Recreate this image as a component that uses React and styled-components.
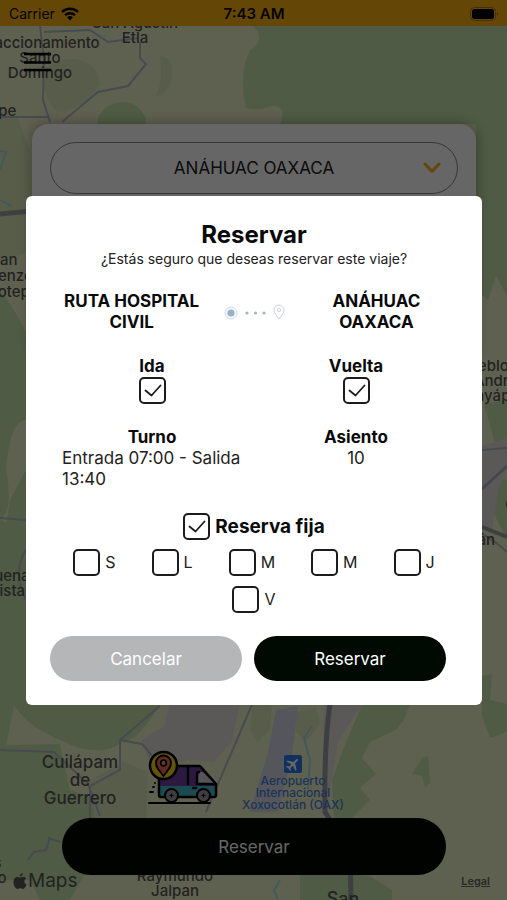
import React, { useState } from "react";
import styled, { createGlobalStyle } from "styled-components";

const GlobalStyle = createGlobalStyle`
  * {
    box-sizing: border-box;
  }
  body {
    margin: 0;
    font-family: Inter, "Liberation Sans", sans-serif;
    color: #0a0a0a;
  }
  button, select, input {
    font-family: inherit;
  }
`;

const Screen = styled.div`
  position: relative;
  min-height: 100vh;
  display: flex;
  flex-direction: column;
  overflow: hidden;
  background-color: #f0f5c8;
`;

/* ---------- map ---------- */

const MapLayer = styled.div`
  position: absolute;
  inset: 0;
`;

const MapDrawing = styled.svg`
  display: block;
  width: 100%;
  height: 100%;
`;

const MapLabel = styled.span`
  position: absolute;
  left: ${({ $x }) => $x}px;
  top: ${({ $y }) => $y}px;
  transform: translateX(-50%);
  text-align: center;
  white-space: pre;
  font-weight: 500;
  font-size: ${({ $size }) => $size || 15}px;
  line-height: ${({ $line }) => $line || 15}px;
  color: ${({ $color }) => $color || "#555555"};
`;

const MapPin = styled.svg`
  position: absolute;
  left: ${({ $x }) => $x}px;
  top: ${({ $y }) => $y}px;
`;

const Attribution = styled.div`
  position: absolute;
  left: 13px;
  right: 17px;
  bottom: 8px;
  display: flex;
  justify-content: space-between;
  align-items: center;
  color: #555555;
`;

const MapsLogo = styled.span`
  display: flex;
  align-items: center;
  gap: 1px;
  font-size: 19px;
  line-height: 22px;
`;

const LegalLink = styled.a`
  color: #666666;
  font-size: 11px;
  font-weight: 600;
`;

/* ---------- screen behind the dialog ---------- */

const StatusBar = styled.header`
  position: relative;
  display: grid;
  grid-template-columns: 1fr auto 1fr;
  align-items: center;
  height: 26px;
  padding: 2px 8px 0 9px;
  background-color: #fbb211;
  font-size: 14px;
  line-height: 20px;
`;

const Carrier = styled.span`
  display: flex;
  align-items: center;
  gap: 6px;
`;

const Clock = styled.span`
  font-size: 15px;
  font-weight: 600;
`;

const Battery = styled.svg`
  justify-self: end;
`;

const MenuButton = styled.button`
  position: relative;
  align-self: flex-start;
  display: flex;
  margin: 25px 0 0 22px;
  padding: 0;
  border: none;
  background-color: transparent;
  cursor: pointer;
`;

const RouteCard = styled.section`
  position: relative;
  margin: 50px 31px 0 32px;
  padding: 18px;
  height: 240px;
  border-radius: 16px;
  background-color: #ffffff;
  box-shadow: 0 0 14px rgba(0, 0, 0, 0.35);
`;

const SelectField = styled.label`
  display: grid;
  align-items: center;

  > * {
    grid-area: 1 / 1;
  }
`;

const RouteSelect = styled.select`
  appearance: none;
  width: 100%;
  height: 52px;
  border: 1px solid #888888;
  border-radius: 26px;
  background-color: #ffffff;
  color: #222222;
  font-size: 17px;
  text-align-last: center;
`;

const SelectArrow = styled.svg`
  justify-self: end;
  margin-right: 17px;
  pointer-events: none;
`;

const ReserveBar = styled.div`
  position: relative;
  margin-top: auto;
  padding: 0 61px 25px 62px;
`;

const ReserveButton = styled.button`
  width: 100%;
  height: 57px;
  border: none;
  border-radius: 29px;
  background-color: #000800;
  color: #ffffff;
  font-size: 17px;
  cursor: pointer;
`;

/* ---------- dialog ---------- */

const Backdrop = styled.div`
  position: fixed;
  inset: 0;
  display: flex;
  align-items: center;
  justify-content: center;
  padding: 1px 25px 0 26px;
  background-color: rgba(0, 0, 0, 0.6);
`;

const Modal = styled.div`
  width: 100%;
  display: flex;
  flex-direction: column;
  gap: 23px;
  padding: 24px;
  border-radius: 6px;
  background-color: #ffffff;
  font-size: 17px;
  line-height: 21px;
`;

const ModalHeader = styled.div`
  text-align: center;
`;

const ModalTitle = styled.h1`
  margin: 0;
  font-size: 24px;
  line-height: 30px;
  font-weight: 700;
`;

const ModalText = styled.p`
  margin: 0;
  color: #222222;
  font-size: 14px;
  line-height: 18px;
`;

const RouteRow = styled.div`
  display: grid;
  grid-template-columns: 2fr 1fr 2fr;
  align-items: center;
  justify-items: center;
`;

const RouteName = styled.strong`
  padding: 0 8px;
  text-align: center;
  font-weight: 700;
`;

const TwoColumns = styled.div`
  display: grid;
  grid-template-columns: 1fr 1fr;
`;

const Field = styled.label`
  display: flex;
  flex-direction: column;
  align-items: center;
  font-weight: 700;
`;

const Detail = styled.div`
  display: flex;
  flex-direction: column;
  align-items: center;
  padding: 0 12px;
  color: #222222;
`;

const DetailTitle = styled.strong`
  color: #0a0a0a;
  font-weight: 700;
`;

const FixedBooking = styled.div`
  display: flex;
  flex-direction: column;
  gap: 9px;
`;

const FixedLabel = styled.label`
  display: flex;
  align-items: center;
  justify-content: center;
  gap: 5px;
  font-size: 19px;
  font-weight: 700;
`;

const Days = styled.div`
  display: flex;
  flex-wrap: wrap;
  justify-content: center;
  gap: 10px 36px;
`;

const DayLabel = styled.label`
  display: flex;
  align-items: center;
  gap: 5px;
  color: #222222;
  font-size: 16px;
`;

const CheckWrapper = styled.span`
  display: grid;

  > * {
    grid-area: 1 / 1;
  }
  svg {
    pointer-events: none;
  }
`;

const CheckInput = styled.input`
  appearance: none;
  width: 27px;
  height: 27px;
  margin: 0;
  border: 2px solid #1c1c1c;
  border-radius: 5px;
  background-color: #ffffff;
`;

const Actions = styled.div`
  display: grid;
  grid-template-columns: 1fr 1fr;
`;

const ActionButton = styled.button`
  height: 45px;
  margin-right: 12px;
  border: none;
  border-radius: 23px;
  background-color: ${({ $muted }) => ($muted ? "#b5b6b8" : "#000a02")};
  color: #ffffff;
  font-size: 17px;
  cursor: pointer;
`;

const labels = [
  { text: "San Agustín\nEtla", x: 135, y: 15 },
  { text: "Fraccionamiento\nSanto\nDomingo", x: 40, y: 35 },
  { text: "Felipe", x: -5, y: 103 },
  { text: "San\nLorenzo\nCacaotepec", x: 4, y: 252, line: 16 },
  { text: "Pueblo\nSan Andrés", x: 484, y: 358 },
  { text: "Huayápam", x: 494, y: 388 },
  { text: "Tlalixtac\nde Cabrera", x: 545, y: 481 },
  { text: "Tomatlán", x: 462, y: 532 },
  { text: "Buena\nVista", x: 7, y: 568 },
  { text: "Cuilápam\nde\nGuerrero", x: 80, y: 753, size: 17, line: 18 },
  {
    text: "Aeropuerto\nInternacional\nXoxocotlán (OAX)",
    x: 293,
    y: 775,
    size: 12,
    line: 12,
    color: "#4780d8",
  },
  { text: "Andrés\nZaachilo", x: -24, y: 855 },
  { text: "San\nRaymundo\nJalpan", x: 175, y: 853 },
  { text: "San\nBartolo", x: 343, y: 890, size: 18, line: 18 },
];

const days = ["S", "L", "M", "M", "J", "V"];

const MapBackground = () => (
  <MapDrawing viewBox="0 0 507 900" preserveAspectRatio="xMidYMid slice" aria-hidden="true">
    <rect width="507" height="900" fill="#eef2c8" />
    <g fill="#c6e4aa">
      <path d="M0 112L18 118 30 150 34 250 0 262z" fill="#dce9ba" />
      <path d="M44 70Q62 55 80 60T100 84Q84 110 58 112 40 98 44 70z" fill="#d9e9b8" />
      <path d="M98 118Q104 104 122 102 140 102 146 120V130H98z" />
      <path d="M160 56q14 2 12 20t-16 20q8-18 4-40z" fill="#d9e9b8" />
      <path d="M253 26H507V296L496 276 488 300 476 290V124H280Q288 106 272 106 258 112 246 108 238 74 250 50 262 44 258 32z" />
      <path d="M0 292Q12 304 26 332V420Q10 420 6 470 14 510 0 520z" />
      <path d="M10 500L26 470V540H4z" />
      <path d="M0 520L26 530V704H0z" />
      <path d="M0 630L26 620V704H160Q140 740 122 742 100 760 60 740 30 728 14 706L6 746H0z" />
      <path d="M0 745L60 744 70 790 100 800 110 830 70 900H40L30 880H0z" />
      <path d="M90 780L124 762 148 772 146 830H96z" fill="#d9e9b8" />
      <path d="M484 404L507 400V452L494 440z" />
      <path d="M482 468L507 480V540L492 510z" />
      <path d="M362 704H410L404 720 396 730 370 742 362 758 376 774 360 788 370 800 350 820H334L332 780 342 752z" />
      <path d="M422 758L428 756 430 782 425 788 422 776 412 774z" />
      <path d="M482 676L492 674 490 700 507 704V732L490 738 482 716z" />
      <path d="M253 704H272L270 730 258 742 250 730z" fill="#d9e9b8" />
      <path d="M296 712L316 708 320 724 306 742 296 732z" fill="#d9e9b8" />
      <path d="M300 870L370 876 392 890V900H300z" />
    </g>
    <g fill="#e2dedc">
      <path d="M170 704H240L232 742 214 762 190 760 150 766 142 740 164 726z" />
      <path d="M324 704H362L338 742 330 790 322 800z" />
      <path d="M482 446L507 438V470L498 490 492 530 482 528z" />
      <path d="M276 710L298 706 292 756 278 812H250L268 752z" fill="#d3d7e4" />
    </g>
    <g fill="none" stroke="#b3bac6" strokeWidth="2">
      <path d="M40 26L44 60 43 100 50 122M44 32L90 30 108 42 138 38M140 42V58L146 64 128 86 98 92 62 122M0 117H48" />
      <path d="M0 750L54 752 88 784 100 816M160 706L120 740V770L90 786V820M120 740L142 744 154 758" />
      <path d="M254 700L206 812M48 838L60 842M28 860L34 852 46 850 50 838" />
      <path d="M482 534Q494 540 507 552M482 450L507 448M0 518L26 520M26 550Q12 570 26 600" />
    </g>
    <g fill="none" stroke="#a8dce8" strokeWidth="2">
      <path d="M0 151L6 152 0 170M0 200L12 206" />
      <path d="M312 726L304 738 310 760 308 790M280 880L274 890 278 900" />
    </g>
    <g fill="none" stroke="#9b9ea8" strokeWidth="5">
      <path d="M0 214L32 211" />
      <path d="M330 704Q324 744 325 812L350 850 351 900" />
      <path d="M482 489L507 466" strokeWidth="3" stroke="#aab2c4" />
      <path d="M482 527L507 537" strokeWidth="4" />
    </g>
  </MapDrawing>
);

const VanPin = () => (
  <MapPin $x={148} $y={750} width="71" height="56" viewBox="0 0 71 56" aria-hidden="true">
    <path d="M11 38V20L30 16H51L60 26 68 34V38z" fill="#6b3fa0" />
    <path d="M11 36H68V47H11z" fill="#45bcc8" />
    <path d="M51 22H55L67 34H50V25z" fill="#d5d2da" />
    <g fill="none" stroke="#000000" strokeWidth="2.500" strokeLinejoin="round" strokeLinecap="round">
      <path d="M27 16H52L68 34V45Q68 47 66 47H62M48 47H31M16 47H13Q11 47 11 45V28" />
      <path d="M40 17V34M51 22Q49 22 49 25V34H67" />
      <path d="M45 38H48" />
      <path d="M1 53H62M2 42H5M5 37H6M7 33H7" strokeWidth="2" />
    </g>
    <g fill="#9c9ca6" stroke="#000000" strokeWidth="2">
      <circle cx="23.500" cy="45.500" r="6.500" />
      <circle cx="55.500" cy="45.500" r="6.500" />
    </g>
    <path d="M23.500 43.500V47.500M21.500 45.500H25.500M55.500 43.500V47.500M53.500 45.500H57.500" stroke="#000000" strokeWidth="1.200" />
    <circle cx="15.500" cy="15.500" r="13.500" fill="#fbd118" stroke="#000000" strokeWidth="2.500" />
    <path d="M15.500 26C10 19 8 17 8 13a7.500 7.500 0 0 1 15 0C23 17 21 19 15.500 26z" fill="#f26b4e" stroke="#000000" strokeWidth="1.800" />
    <circle cx="15.500" cy="13" r="2.800" fill="#f9a06a" stroke="#000000" strokeWidth="1.800" />
  </MapPin>
);

const AirportPin = () => (
  <MapPin $x={284} $y={755} width="18" height="18" viewBox="0 0 18 18" aria-hidden="true">
    <rect width="18" height="18" rx="2" fill="#2878e8" />
    <path
      transform="rotate(45 9 9)"
      d="M9 2.2Q10 2.2 10 4.5V7L15.5 10.5V12L10 10.3V13.5L12 15V16L9 15.2 6 16V15L8 13.5V10.3L2.5 12V10.5L8 7V4.5Q8 2.2 9 2.2z"
      fill="#ffffff"
    />
  </MapPin>
);

const RouteIcon = () => (
  <svg width="62" height="18" viewBox="0 0 62 18" aria-hidden="true">
    <circle cx="8" cy="10" r="6" fill="#f3f7fb" stroke="#cddbe8" strokeWidth="1" />
    <circle cx="8" cy="10" r="3.6" fill="#9db1c4" />
    <g fill="#a9b4be">
      <circle cx="24" cy="10" r="1.6" />
      <circle cx="32.500" cy="10" r="1.6" />
      <circle cx="41" cy="10" r="1.6" />
    </g>
    <path d="M56 16C52.500 11.500 51 9.500 51 7a5 5 0 0 1 10 0C61 9.500 59.500 11.500 56 16z" fill="#ffffff" stroke="#ccd3d9" />
    <circle cx="56" cy="7" r="1.6" fill="none" stroke="#ccd3d9" />
  </svg>
);

const Checkbox = ({ checked, onChange, label }) => (
  <CheckWrapper>
    <CheckInput type="checkbox" checked={checked} onChange={onChange} aria-label={label} />
    {checked && (
      <svg width="27" height="27" viewBox="0 0 27 27" fill="none" aria-hidden="true">
        <path
          d="M6.500 13.500L12.500 18.500 21.500 8.500"
          stroke="#1c1c1c"
          strokeWidth="1.8"
          strokeLinecap="round"
          strokeLinejoin="round"
        />
      </svg>
    )}
  </CheckWrapper>
);

const App = () => {
  const [outbound, setOutbound] = useState(true);
  const [inbound, setInbound] = useState(true);
  const [fixed, setFixed] = useState(true);
  const [selectedDays, setSelectedDays] = useState([]);

  const toggleDay = (index) => {
    setSelectedDays((current) =>
      current.includes(index) ? current.filter((day) => day !== index) : [...current, index]
    );
  };

  return (
    <Screen>
      <GlobalStyle />

      <MapLayer>
        <MapBackground />
        {labels.map(({ text, x, y, size, line, color }) => (
          <MapLabel key={text} $x={x} $y={y} $size={size} $line={line} $color={color}>
            {text}
          </MapLabel>
        ))}
        <VanPin />
        <AirportPin />
        <Attribution>
          <MapsLogo>
            <svg width="14" height="16" viewBox="0 0 14 16" fill="currentColor" aria-hidden="true">
              <path d="M9.800 0C9.900 1.800 8.500 3.500 6.800 3.500 6.700 1.900 8.200.2 9.800 0zM7 4.600C7.800 4.600 8.700 3.800 10 3.800 11.300 3.800 12.500 4.500 13.200 5.500 10.600 7 11 10.500 13.600 11.600 13 13.400 11.500 15.900 10 15.900 9 15.900 8.500 15.300 7.300 15.300 6 15.300 5.500 15.900 4.500 15.900 2.500 15.900.4 12.200.4 9 .4 5.800 2.300 4 4.300 4 5.500 4 6.300 4.600 7 4.600z" />
            </svg>
            Maps
          </MapsLogo>
          <LegalLink href="#legal">Legal</LegalLink>
        </Attribution>
      </MapLayer>

      <StatusBar>
        <Carrier>
          Carrier
          <svg width="18" height="14" viewBox="0 0 18 14" fill="none" stroke="#000000" aria-hidden="true">
            <path d="M1 5A11.500 11.500 0 0 1 17 5" strokeWidth="2.400" />
            <path d="M4 8.200A7.200 7.200 0 0 1 14 8.200" strokeWidth="2.400" />
            <path d="M6.200 10.400A4 4 0 0 1 11.800 10.400L9 13.500z" fill="#000000" stroke="none" />
          </svg>
        </Carrier>
        <Clock>7:43 AM</Clock>
        <Battery width="29" height="14" viewBox="0 0 29 14" aria-hidden="true">
          <rect x="0.500" y="0.500" width="25" height="13" rx="4" fill="none" stroke="#a87818" />
          <rect x="2" y="2" width="22" height="10" rx="2.500" />
          <path d="M27 5Q29 7 27 9z" fill="#a87818" />
        </Battery>
      </StatusBar>

      <MenuButton type="button" aria-label="Menú">
        <svg width="30" height="23" viewBox="0 0 30 23" stroke="#000000" strokeWidth="2.400" aria-hidden="true">
          <path d="M2 3H29M2 11.500H29M2 19H29" />
        </svg>
      </MenuButton>

      <RouteCard>
        <SelectField>
          <RouteSelect aria-label="Destino" defaultValue="anahuac">
            <option value="anahuac">ANÁHUAC OAXACA</option>
          </RouteSelect>
          <SelectArrow width="18" height="12" viewBox="0 0 18 12" fill="none" aria-hidden="true">
            <path d="M2 2L9 9.500 16 2" stroke="#fbb211" strokeWidth="3" strokeLinecap="round" strokeLinejoin="round" />
          </SelectArrow>
        </SelectField>
      </RouteCard>

      <ReserveBar>
        <ReserveButton type="button">Reservar</ReserveButton>
      </ReserveBar>

      <Backdrop>
        <Modal role="dialog" aria-modal="true" aria-labelledby="modal-title">
          <ModalHeader>
            <ModalTitle id="modal-title">Reservar</ModalTitle>
            <ModalText>¿Estás seguro que deseas reservar este viaje?</ModalText>
          </ModalHeader>

          <RouteRow>
            <RouteName>RUTA HOSPITAL CIVIL</RouteName>
            <RouteIcon />
            <RouteName>ANÁHUAC OAXACA</RouteName>
          </RouteRow>

          <TwoColumns>
            <Field>
              Ida
              <Checkbox checked={outbound} onChange={() => setOutbound(!outbound)} label="Ida" />
            </Field>
            <Field>
              Vuelta
              <Checkbox checked={inbound} onChange={() => setInbound(!inbound)} label="Vuelta" />
            </Field>
          </TwoColumns>

          <TwoColumns>
            <Detail>
              <DetailTitle>Turno</DetailTitle>
              <span>Entrada 07:00 - Salida 13:40</span>
            </Detail>
            <Detail>
              <DetailTitle>Asiento</DetailTitle>
              <span>10</span>
            </Detail>
          </TwoColumns>

          <FixedBooking>
            <FixedLabel>
              <Checkbox checked={fixed} onChange={() => setFixed(!fixed)} label="Reserva fija" />
              Reserva fija
            </FixedLabel>
            <Days>
              {days.map((day, index) => (
                <DayLabel key={index}>
                  <Checkbox
                    checked={selectedDays.includes(index)}
                    onChange={() => toggleDay(index)}
                    label={day}
                  />
                  {day}
                </DayLabel>
              ))}
            </Days>
          </FixedBooking>

          <Actions>
            <ActionButton type="button" $muted>
              Cancelar
            </ActionButton>
            <ActionButton type="button">Reservar</ActionButton>
          </Actions>
        </Modal>
      </Backdrop>
    </Screen>
  );
};

export default App;
